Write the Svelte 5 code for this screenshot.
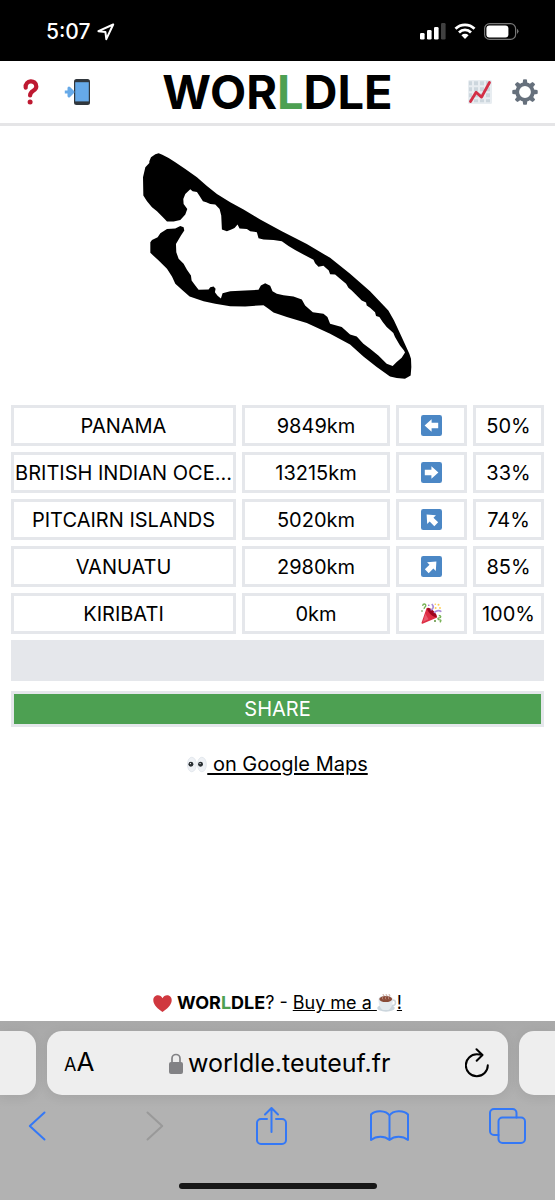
<script lang="ts">
    type Direction = 'left' | 'right' | 'up-left' | 'up-right' | 'win';

    type Guess = {
        country: string;
        distance: number;
        direction: Direction;
        percent: number;
    };

    // Long country names are shortened to fit their cell
    const guesses: Guess[] = [
        { country: 'PANAMA', distance: 9849, direction: 'left', percent: 50 },
        { country: 'BRITISH INDIAN OCE...', distance: 13215, direction: 'right', percent: 33 },
        { country: 'PITCAIRN ISLANDS', distance: 5020, direction: 'up-left', percent: 74 },
        { country: 'VANUATU', distance: 2980, direction: 'up-right', percent: 85 },
        { country: 'KIRIBATI', distance: 0, direction: 'win', percent: 100 }
    ];

    // Rotation of the left-pointing arrow, in degrees
    const angles: Record<string, number> = { left: 0, right: 180, 'up-left': 45, 'up-right': 135 };

    const gearTeeth = [0, 45, 90, 135, 180, 225, 270, 315];
</script>

<div class="screen">
    <div class="status-bar">
        <div class="clock">
            <span>5:07</span>
            <svg width="18" height="18" viewBox="0 0 18 18" aria-hidden="true">
                <path d="M16.2 1.5 1.4 8.2l7 .8.9 7.2Z" fill="none" stroke="#fff" stroke-width="2" stroke-linejoin="round" />
            </svg>
        </div>
        <div class="signals">
            <svg width="26" height="17" viewBox="0 0 26 17" aria-hidden="true">
                <g fill="#fff">
                    <rect x="0" y="10" width="4.600" height="6.500" rx="1.300" />
                    <rect x="7" y="7" width="4.600" height="9.500" rx="1.300" />
                    <rect x="14" y="4" width="4.600" height="12.500" rx="1.300" />
                    <rect x="21" y="0" width="4.600" height="16.500" rx="1.300" opacity=".25" />
                </g>
            </svg>
            <svg width="22" height="17" viewBox="0 0 22 17" aria-hidden="true">
                <path d="M1.5 5.8a13.6 13.6 0 0 1 19 0M5 9.4a8.6 8.6 0 0 1 12 0" fill="none" stroke="#fff" stroke-width="2.800" />
                <path d="m11 16-3.600-3.700a5.100 5.100 0 0 1 7.200 0Z" fill="#fff" />
            </svg>
            <svg width="35" height="17" viewBox="0 0 35 17" aria-hidden="true">
                <rect x=".6" y=".6" width="31" height="15.800" rx="5" fill="none" stroke="#777" stroke-width="1.200" />
                <rect x="2.400" y="2.400" width="22" height="12.200" rx="3" fill="#fff" />
                <path d="M33 5.800q3 2.500 0 5.200Z" fill="#777" />
            </svg>
        </div>
    </div>

    <header>
        <div class="buttons">
            <button aria-label="How to play">
                <svg width="26" height="26" viewBox="-5.500 0 26 26">
                    <path d="M3.200 8.600C2.200 .6 13.800.4 13.800 7.400c0 5-6.200 3.800-6.200 9" fill="none" stroke="#be1931" stroke-width="4.200" stroke-linecap="round" />
                    <circle cx="7.600" cy="23" r="2.500" fill="#be1931" />
                </svg>
            </button>
            <button aria-label="Install the app">
                <svg width="28" height="26" viewBox="0 0 28 26">
                    <rect x="11" y="0" width="16" height="26" rx="2.500" fill="#31373d" />
                    <path d="M12.200 3.200h13.600v19.200H12.200Z" fill="#66a9e8" />
                    <path d="M1.800 13h7M6 9l4 4-4 4Z" fill="#66a9e8" stroke="#66a9e8" stroke-width="3" stroke-linejoin="round" />
                </svg>
            </button>
        </div>
        <h1>WOR<span class="green">L</span>DLE</h1>
        <div class="buttons end">
            <button aria-label="Statistics">
                <svg width="24" height="24" viewBox="0 0 24 24">
                    <rect width="24" height="24" rx="1.500" fill="#e8edf1" />
                    <path d="M1 1.300h3v4H1zM6 1.300h4v4H6zM12 1.300h4v4h-4zM18 1.300h4v4h-4zM1 7.300h3v4H1zM6 7.300h4v4H6zM12 7.300h4v4h-4zM18 7.300h4v4h-4zM1 13.300h3v4H1zM6 13.300h4v4H6zM12 13.300h4v4h-4zM18 13.300h4v4h-4zM1 19.300h3v3H1zM6 19.300h4v3H6zM12 19.300h4v3h-4zM18 19.300h4v3h-4z" fill="#ccd6dd" />
                    <path d="m2.500 21.500 5.600-9.200 5.400 4.800L21.500 2.500" fill="none" stroke="#d32f46" stroke-width="2.800" stroke-linecap="round" stroke-linejoin="round" />
                </svg>
            </button>
            <button aria-label="Settings">
                <svg width="26" height="26" viewBox="0 0 26 26">
                    <circle cx="13" cy="13" r="7.800" fill="none" stroke="#66707c" stroke-width="3.800" />
                    {#each gearTeeth as angle}
                        <path d="m10.600 4.600.5-4q1.900-.7 3.800 0l.5 4Z" fill="#66707c" transform="rotate({angle} 13 13)" />
                    {/each}
                </svg>
            </button>
        </div>
    </header>

    <main>
        <svg class="country" viewBox="38 37 808 680" role="img" aria-label="Outline of the country to guess">
            <path d="M57 62 62 50 75 41 85 38 96 42 115 52 135 65 165 85 200 110 230 136 260 160 300 185 340 207 390 237 455 272 530 310 600 352 660 400 720 452 775 510 792 540 815 590 838 640 843 655 844 680 842 705 825 715 800 713 780 708 740 680 700 648 660 612 600 580 530 548 470 530 430 516 415 505 400 494 345 498 300 497 255 490 220 482 178 468 160 452 135 430 125 408 110 385 85 360 60 337 60 305 65 298 82 290 90 278 110 265 135 264 150 256 160 260 162 270 152 285 137 310 138 335 145 355 160 370 170 388 182 405 184 420 195 435 205 448 235 447 240 440 250 438 256 445 254 455 262 466 272 474 277 458 300 452 345 450 385 448 392 435 405 428 420 436 427 452 440 460 460 464 490 468 515 477 525 495 548 515 580 520 592 530 600 550 635 560 660 582 680 588 700 610 720 625 745 645 770 670 788 677 800 665 815 652 825 636 822 630 810 615 795 590 790 578 770 560 758 545 748 530 738 527 735 515 720 502 710 495 708 486 695 480 680 465 665 450 655 442 648 430 630 415 615 402 600 401 596 390 580 376 565 379 555 368 550 358 520 342 495 328 475 316 455 302 430 298 400 297 385 293 380 275 360 272 350 265 328 264 322 252 313 262 305 266 290 272 275 267 273 225 268 205 255 192 240 190 228 185 218 182 207 165 200 154 187 152 180 146 165 160 159 175 160 190 171 205 165 222 150 238 130 243 110 243 100 232 80 212 65 200 50 182 39 165 38 110 45 80 57 67Z" />
        </svg>

        <table aria-label="Guesses">
            <colgroup>
                <col span="7" />
            </colgroup>
            <tbody>
                {#each guesses as guess}
                    <tr>
                        <td colspan="3">{guess.country}</td>
                        <td colspan="2">{guess.distance}km</td>
                        <td>
                            {#if guess.direction === 'win'}
                                <svg class="emoji" viewBox="0 0 21 21" role="img" aria-label="Correct">
                                    <path d="m1.2 20 5-14.500 9.200 8.500Z" fill="#dd2e44" stroke="#dd2e44" stroke-width="1.400" stroke-linejoin="round" />
                                    <path d="m2 19 2.300-8.200 3.200 5.400Z" fill="#ea596e" />
                                    <ellipse cx="11" cy="9.600" rx="2.200" ry="6.400" transform="rotate(-46 11 9.600)" fill="#a0041e" />
                                    <path d="M1.600 2.800C2 .3 5 .6 4.800 2.600c-.2 1.600-2 1.600-1.600 3.400M17.800 12.500c2.600 0 2.600 2.200.4 2.400s-1.400 2 .8 2-.2 2.400-.2 2.400" fill="none" stroke="#77b255" stroke-width="1.300" />
                                    <path d="M9.600 7c2.800-.6 3.600-3.600 1.200-6M13.200 10c1-2.400 4.600-3 7.200-1.400" fill="none" stroke="#aa8dd8" stroke-width="1.700" />
                                    <g fill="#ffcc4d">
                                        <circle cx="14.600" cy="5" r="1" />
                                        <circle cx="17.500" cy="1.700" r="1" />
                                        <circle cx="19" cy="5" r=".9" />
                                        <circle cx="14.300" cy="1.200" r=".8" />
                                    </g>
                                    <circle cx="1" cy="8" r=".8" fill="#5c913b" />
                                    <circle cx="14" cy="18" r="1" fill="#5c913b" />
                                    <circle cx="7.800" cy="2.200" r=".8" fill="#9266cc" />
                                </svg>
                            {:else}
                                <svg class="emoji" viewBox="0 0 21 21" role="img" aria-label={guess.direction}>
                                    <rect width="21" height="21" rx="2.300" fill="#4b87c5" />
                                    <path d="m3.600 10.500 7-6.200v3.500h6.600v5.400h-6.600v3.500Z" fill="#fff" transform="rotate({angles[guess.direction]} 10.500 10.500)" />
                                </svg>
                            {/if}
                        </td>
                        <td>{guess.percent}%</td>
                    </tr>
                {/each}
                <tr>
                    <td class="unused" colspan="7"></td>
                </tr>
            </tbody>
        </table>

        <button class="share">SHARE</button>

        <a class="maps" href="https://www.google.com/maps?q=Kiribati">
            <svg width="20" height="17" viewBox="0 0 22 18" aria-hidden="true">
                <g fill="#eef1f5" stroke="#d9dfe6" stroke-width=".7">
                    <ellipse cx="5.300" cy="9" rx="4.900" ry="8" />
                    <ellipse cx="16.400" cy="9" rx="4.900" ry="8" />
                </g>
                <g fill="#292f33">
                    <circle cx="4.300" cy="8.800" r="2.700" />
                    <circle cx="14.900" cy="8.800" r="2.700" />
                </g>
                <circle cx="3.800" cy="8" r=".7" fill="#fff" />
                <circle cx="14.400" cy="8" r=".7" fill="#fff" />
            </svg><span>&nbsp;on Google Maps</span>
        </a>
    </main>

    <footer>
        <svg width="19" height="17" viewBox="0 0 19 17" aria-hidden="true">
            <path d="M9.500 17C5 14 .3 9.700.3 5.200.3-.7 7.500-1.500 9.500 3.200 11.500-1.500 18.700-.7 18.700 5.200 18.700 9.700 14 14 9.500 17Z" fill="#d0383f" />
        </svg>
        <span><strong>WOR<span class="green">L</span>DLE</strong>? -</span>
        <a href="https://www.ko-fi.com/teuteuf"><span>Buy me a&nbsp;</span><svg width="20" height="18" viewBox="0 0 20 18" aria-label="coffee">
                <ellipse cx="9" cy="14" rx="8.800" ry="3.700" fill="#ccd6dd" />
                <circle cx="15.800" cy="8.800" r="2.700" fill="none" stroke="#ccd6dd" stroke-width="1.500" />
                <path d="M1.500 5.500h14.400c0 6-2.400 10-5 10.500H6.500C3.900 15.500 1.500 11.500 1.500 5.500Z" fill="#e4e9ee" />
                <ellipse cx="8.700" cy="5" rx="7.200" ry="3.600" fill="#e1e8ed" />
                <ellipse cx="8.700" cy="5.100" rx="6.400" ry="3" fill="#8a4b38" />
                <path d="M6 5.400q-1.500-1.500 0-2.700t0-2.500M9 5.400q-1.500-1.500 0-2.700t0-2.500M12 5.400q-1.500-1.500 0-2.700t0-2.500" fill="none" stroke="#b98b7c" stroke-width=".9" />
            </svg><span>!</span></a>
    </footer>

    <div class="browser">
        <div class="tabs">
            <div class="tab edge"></div>
            <div class="tab current">
                <button class="text-size" aria-label="Page settings"><small>A</small>A</button>
                <div class="address">
                    <svg width="14" height="21" viewBox="0 0 14 21" aria-hidden="true">
                        <path d="M3 10V5.500a4 4 0 0 1 8 0V10" fill="none" stroke="#828285" stroke-width="1.700" />
                        <rect y="9" width="14" height="12" rx="2" fill="#828285" />
                    </svg>
                    <span>worldle.teuteuf.fr</span>
                </div>
                <button aria-label="Reload">
                    <svg width="24" height="30" viewBox="0 0 24 30" fill="none" stroke="#000" stroke-width="2" stroke-linecap="round" stroke-linejoin="round">
                        <path d="M22.800 17.200A11 11 0 1 1 12 6.300q2.500 0 5 .6M11.500 1.200l6 5.800-5.800 5.700" />
                    </svg>
                </button>
            </div>
            <div class="tab edge"></div>
        </div>

        <nav aria-label="Browser">
            <button aria-label="Back">
                <svg width="18" height="30" viewBox="0 0 18 30"><path d="M16.500 1.500 1.800 15l14.700 13.500" /></svg>
            </button>
            <button class="disabled" aria-label="Forward" disabled>
                <svg width="18" height="30" viewBox="0 0 18 30"><path d="M1.500 1.500 16.200 15 1.500 28.500" /></svg>
            </button>
            <button aria-label="Share page">
                <svg width="32" height="40" viewBox="0 0 32 40">
                    <path d="M11 13H5a4 4 0 0 0-4 4v17a4 4 0 0 0 4 4h21a4 4 0 0 0 4-4V17a4 4 0 0 0-4-4h-6M15.500 26V2M9 8.500 15.500 2 22 8.500" />
                </svg>
            </button>
            <button aria-label="Bookmarks">
                <svg width="39" height="32" viewBox="0 0 39 32">
                    <path d="M19.500 5.500C16-.1 5-.1 1 4.500V30c5.500-4.200 13.500-4.200 18.500 0 5-4.200 13-4.200 18.500 0V4.500C34-.1 23-.1 19.500 5.500V30" />
                </svg>
            </button>
            <button aria-label="Tabs">
                <svg width="37" height="36" viewBox="0 0 37 36">
                    <path d="M9.500 27H5a4 4 0 0 1-4-4V5a4 4 0 0 1 4-4h18.500a4 4 0 0 1 4 4v4.500" />
                    <rect x="9.500" y="9.500" width="26.500" height="25.500" rx="4" />
                </svg>
            </button>
        </nav>

        <div class="home-indicator"></div>
    </div>
</div>

<style>
    :global(body) {
        margin: 0;
        background: #fff;
    }

    .screen {
        display: flex;
        flex-direction: column;
        min-height: 100vh;
        font-family: Inter, 'Liberation Sans', sans-serif;
        font-size: 20px;
        line-height: 24px;
        color: #000;
    }

    svg {
        display: block;
        flex: none;
    }

    button {
        margin: 0;
        padding: 0;
        border: 0;
        background: none;
        font: inherit;
        color: inherit;
        cursor: pointer;
    }

    a {
        color: inherit;
    }

    .green {
        color: #4da052;
    }

    /* Phone status bar */
    .status-bar {
        display: flex;
        justify-content: space-between;
        align-items: center;
        box-sizing: border-box;
        height: 61px;
        padding: 2px 36px 0 46px;
        background: #000;
        color: #fff;
    }

    .clock {
        display: flex;
        align-items: center;
        gap: 6px;
        font-size: 21px;
        font-weight: 500;
    }

    .signals {
        display: flex;
        align-items: center;
        gap: 8px;
    }

    /* Game header */
    header {
        display: grid;
        grid-template-columns: 1fr auto 1fr;
        align-items: center;
        box-sizing: border-box;
        height: 65px;
        padding: 0 17px;
        border-bottom: 3px solid #e5e5e7;
    }

    .buttons {
        display: flex;
        align-items: center;
        gap: 20px;
    }

    .end {
        justify-content: flex-end;
    }

    h1 {
        margin: 0;
        font-size: 47px;
        line-height: 48px;
        font-weight: 700;
    }

    main {
        flex: 1;
        display: flex;
        flex-direction: column;
        padding: 27px 5px 0;
    }

    .country {
        align-self: center;
        width: 50%;
        max-width: 269px;
    }

    table {
        width: 100%;
        margin-top: 20px;
        table-layout: fixed;
        border-collapse: separate;
        border-spacing: 6px;
    }

    td {
        box-sizing: border-box;
        height: 41px;
        padding: 0;
        border: 3px solid #e5e7eb;
        text-align: center;
        white-space: nowrap;
    }

    .emoji {
        width: 21px;
        height: 21px;
        margin: 0 auto;
    }

    .unused {
        background: #e5e7eb;
    }

    .share {
        height: 36px;
        margin: 4px 6px 0;
        border: 3px solid #e5e7eb;
        background: #4da052;
        color: #fff;
    }

    .maps {
        display: flex;
        align-self: center;
        align-items: center;
        margin-top: 25px;
        text-underline-offset: 2px;
    }

    footer {
        display: flex;
        justify-content: center;
        align-items: center;
        gap: 5px;
        padding-bottom: 6px;
        font-size: 18px;
    }

    footer a {
        display: flex;
        align-items: center;
    }

    /* Browser chrome */
    .browser {
        display: flex;
        flex-direction: column;
        padding-bottom: 11px;
        background: linear-gradient(#a9a9a9, #b2b2b2 50%);
    }

    .tabs {
        display: flex;
        gap: 11px;
        padding-top: 10px;
    }

    .tab {
        height: 64px;
        border-radius: 15px;
        background: #eee;
        box-shadow: 0 2px 12px rgba(0, 0, 0, 0.08);
    }

    .edge {
        width: 36px;
    }

    .edge:first-child {
        border-radius: 0 15px 15px 0;
    }

    .edge:last-child {
        border-radius: 15px 0 0 15px;
    }

    .current {
        flex: 1;
        display: flex;
        justify-content: space-between;
        align-items: center;
        padding: 0 19px 0 17px;
    }

    .text-size {
        font-size: 26px;
    }

    .text-size small {
        font-size: 18px;
    }

    .address {
        display: flex;
        align-items: center;
        gap: 5px;
        font-size: 25px;
    }

    nav {
        display: flex;
        justify-content: space-between;
        align-items: center;
        height: 62px;
        padding: 0 28px 0 17px;
    }

    nav button {
        display: flex;
        justify-content: center;
        width: 40px;
    }

    nav svg {
        fill: none;
        stroke: #3478f6;
        stroke-width: 2;
        stroke-linecap: round;
        stroke-linejoin: round;
    }

    .disabled svg {
        stroke: #999;
    }

    .home-indicator {
        align-self: center;
        width: 198px;
        height: 6px;
        margin-top: 26px;
        border-radius: 3px;
        background: #161616;
    }
</style>
